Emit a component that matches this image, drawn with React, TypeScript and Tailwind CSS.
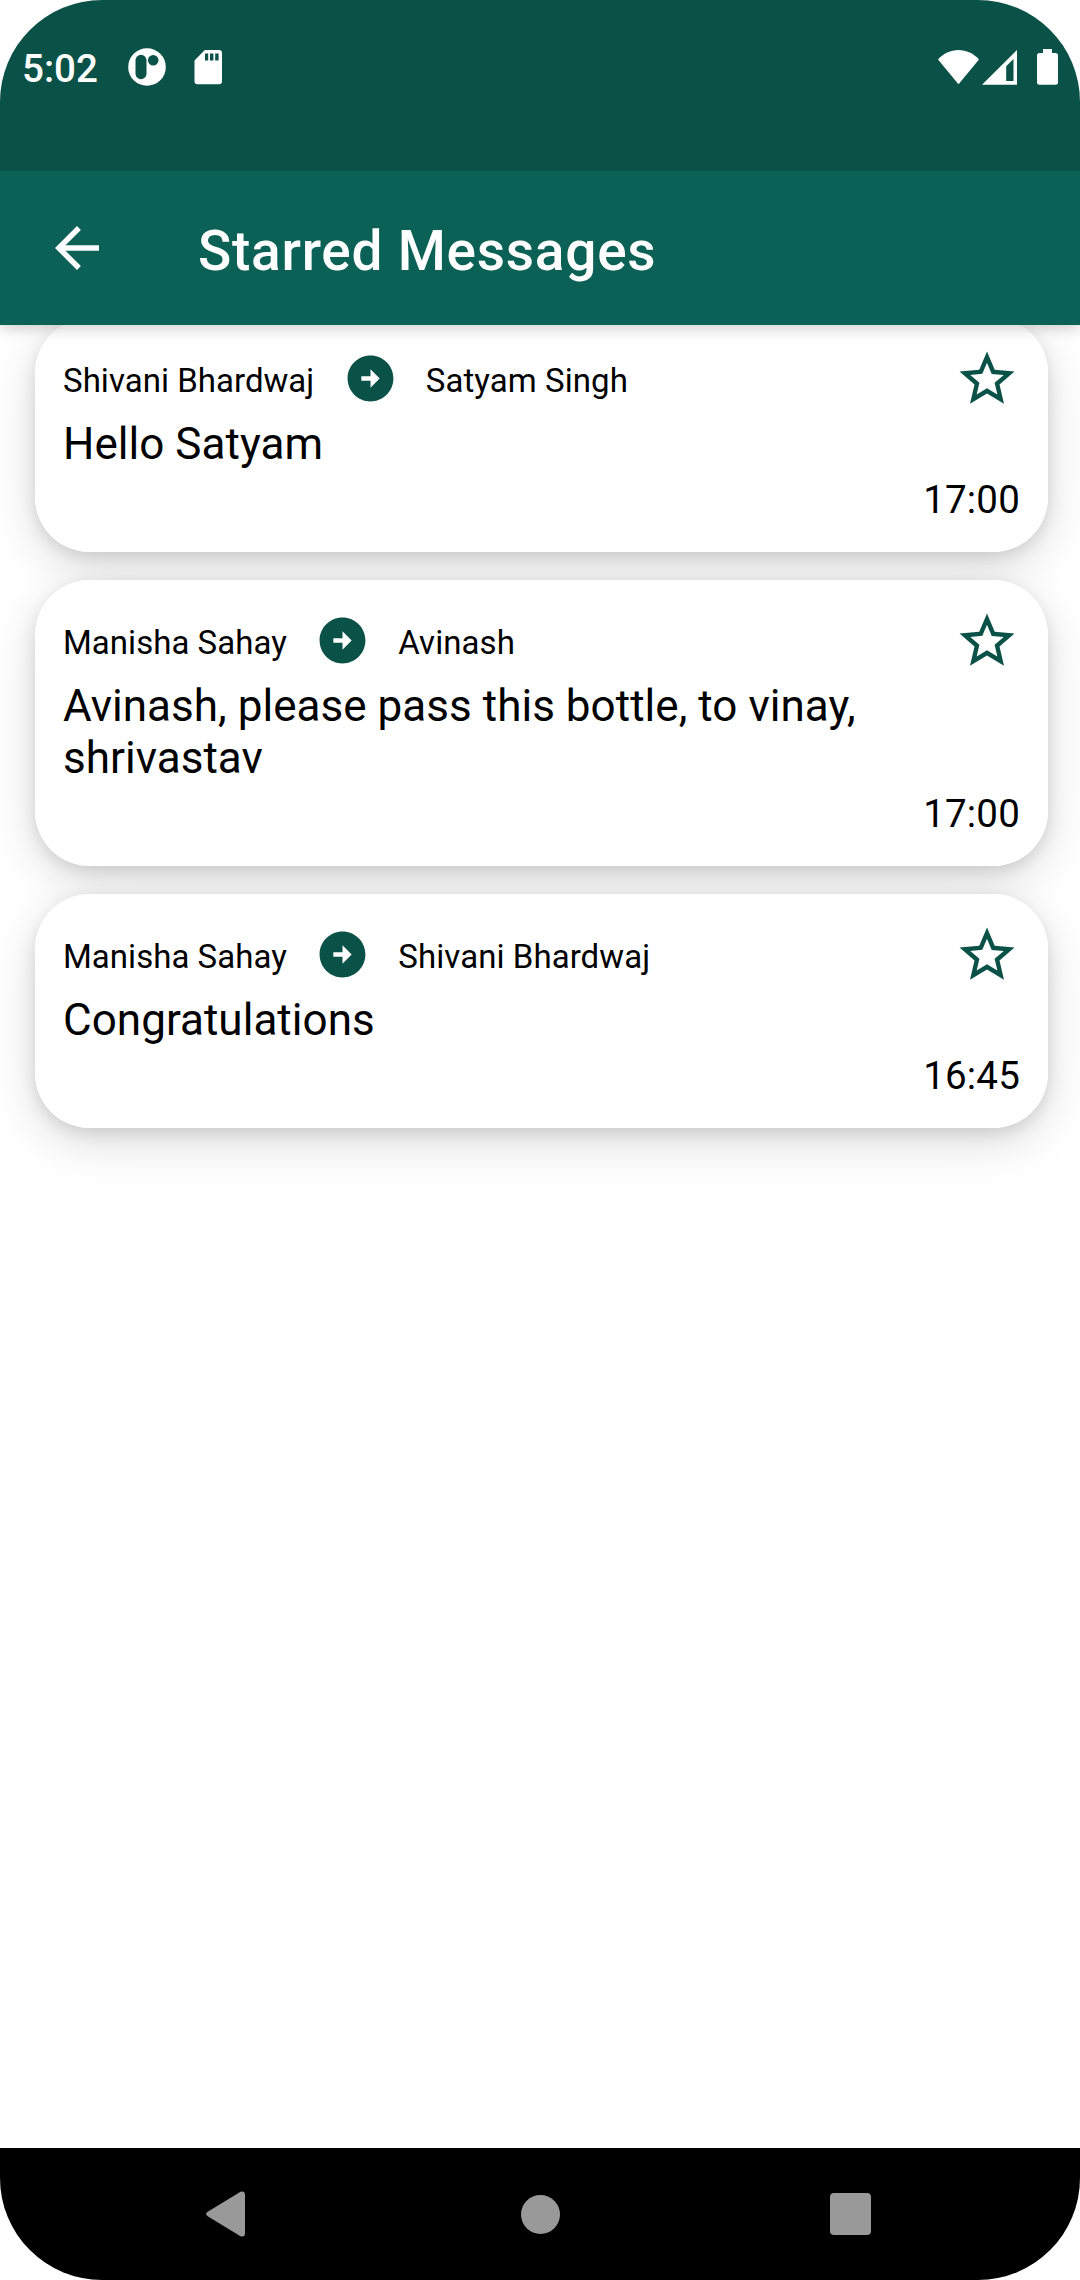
type Message = { from: string; to: string; text: string; time: string };

const messages: Message[] = [
  { from: 'Shivani Bhardwaj', to: 'Satyam Singh', text: 'Hello Satyam', time: '17:00' },
  {
    from: 'Manisha Sahay',
    to: 'Avinash',
    text: 'Avinash, please pass this bottle, to vinay, shrivastav',
    time: '17:00',
  },
  { from: 'Manisha Sahay', to: 'Shivani Bhardwaj', text: 'Congratulations', time: '16:45' },
];

function StatusBar() {
  return (
    <div className="relative z-20 flex h-[171px] shrink-0 items-start justify-between bg-[#0a5148] pr-[22px] pl-[22px] text-white">
      <div className="flex h-[134px] items-center">
        <span className="w-[106px] pt-[5px] text-[38.5px] leading-none font-medium">5:02</span>
        <svg className="h-[38px] w-[38px]" viewBox="0 0 38 38">
          <circle cx="19" cy="19" r="18.8" fill="currentColor" />
          <rect x="7.5" y="6.8" width="11" height="24.4" rx="5.5" fill="#0a5148" />
          <circle cx="25.2" cy="12.3" r="5.3" fill="#0a5148" />
        </svg>
        <svg className="ml-[28px] h-[36px] w-[28px]" viewBox="0 0 28 36">
          <path
            fill="currentColor"
            fillRule="evenodd"
            d="M10.8 1H25a3 3 0 0 1 3 3v28.300a3 3 0 0 1-3 3H3.500a3 3 0 0 1-3-3V11.400zM11 4.500v7h3.200v-7zM16 4.500v7h3.400v-7zM21.200 4.500v7h3.400v-7z"
          />
        </svg>
      </div>
      <div className="flex h-[134px] items-center">
        <svg className="h-[36px] w-[41px]" viewBox="0 0 41 36">
          <path fill="currentColor" d="M0 10.500C5.500 4.500 12.500 1 20.500 1S35.500 4.500 41 10.500L20.500 35.300z" />
        </svg>
        <svg className="ml-[3px] h-[36px] w-[35px]" viewBox="0 0 35 36">
          <path
            fill="currentColor"
            fillRule="evenodd"
            d="M0 35.800L35 1v34.800zM24.200 17.200V32h7.300V9.900z"
          />
        </svg>
        <svg className="ml-[20px] h-[36px] w-[21px]" viewBox="0 0 21 36">
          <path
            fill="currentColor"
            d="M6 0h9v4h3.500A2.500 2.500 0 0 1 21 6.500v26.800a2.500 2.500 0 0 1-2.500 2.500h-16A2.500 2.500 0 0 1 0 33.300V6.500A2.500 2.500 0 0 1 2.500 4H6z"
          />
        </svg>
      </div>
    </div>
  );
}

function AppBar() {
  return (
    <header className="relative z-10 flex h-[154px] shrink-0 items-center bg-[#0c6156] pl-[44px] text-white shadow-[0_3px_14px_rgba(0,0,0,0.2)]">
      <svg className="h-[66px] w-[66px]" viewBox="0 0 24 24" fill="currentColor">
        <path d="M20 11H7.830l5.590-5.590L12 4l-8 8 8 8 1.410-1.410L7.830 13H20v-2z" />
      </svg>
      <h1 className="ml-[88px] pt-[7px] text-[55px] leading-none font-medium tracking-[0.0135em]">Starred Messages</h1>
    </header>
  );
}

function MessageCard({ message }: { message: Message }) {
  return (
    <article className="relative flex flex-col rounded-[55px] bg-white px-[28px] pt-[28px] pb-[29px] before:absolute before:inset-0 before:-z-10 before:rounded-[55px] before:shadow-[0_14px_48px_rgba(0,0,0,0.14),0_5px_16px_rgba(0,0,0,0.11)]">
      <div className="flex h-[66px] items-start">
        <span className="pt-[15px] text-[33px] leading-[39px] tracking-[0.001em]">{message.from}</span>
        <svg className="mr-[28px] ml-[28.5px] mt-[5px] h-[55px] w-[55px] text-[#0a5148]" viewBox="0 0 24 24" fill="currentColor">
          <path d="M22 12c0-5.520-4.480-10-10-10S2 6.480 2 12s4.480 10 10 10 10-4.480 10-10zM12 13H8v-2h4V8l4 4-4 4v-3z" />
        </svg>
        <span className="pt-[15px] text-[33px] leading-[39px] tracking-[0.002em]">{message.to}</span>
        <svg className="ml-auto h-[66px] w-[66px] text-[#0a5148]" viewBox="0 0 24 24" fill="currentColor">
          <path d="M22 9.240l-7.190-.620L12 2 9.190 8.630 2 9.240l5.460 4.730L5.820 21 12 17.270 18.180 21l-1.630-7.030L22 9.240zM12 15.400l-3.760 2.270 1-4.280-3.320-2.880 4.380-.380L12 6.100l1.710 4.040 4.380.380-3.320 2.880 1 4.280L12 15.400z" />
        </svg>
      </div>
      <p className="mt-[6px] w-[850px] text-[44px] leading-[52px] tracking-[0.0008em]">{message.text}</p>
      <time className="mt-[7px] self-end text-[38.5px] leading-[46px] tracking-[0.005em]">{message.time}</time>
    </article>
  );
}

function NavBar() {
  return (
    <nav className="flex h-[132px] shrink-0 items-center bg-black pl-[206px] text-[#999999]">
      <svg className="h-[46px] w-[39px]" viewBox="0 0 39 46" fill="currentColor">
        <path d="M1.300 21L34.500 .800Q39 -.600 39 4v38q0 4.600-4.500 3.200L1.300 25Q-1 23 1.300 21z" />
      </svg>
      <span className="ml-[276px] h-[39px] w-[39px] rounded-full bg-[#999999]" />
      <span className="ml-[270px] h-[42px] w-[41px] rounded-[4px] bg-[#999999]" />
    </nav>
  );
}

export default function App() {
  return (
    <div className="h-[2280px] w-[1080px] bg-white">
      <div className="flex h-full flex-col overflow-hidden rounded-[102px] bg-white font-['Roboto',sans-serif] text-black">
        <StatusBar />
        <AppBar />
        <main className="isolate -mt-[7px] flex flex-1 flex-col gap-[28px] pr-[32px] pl-[35px]">
          {messages.map((message, index) => (
            <MessageCard key={index} message={message} />
          ))}
        </main>
        <NavBar />
      </div>
    </div>
  );
}
